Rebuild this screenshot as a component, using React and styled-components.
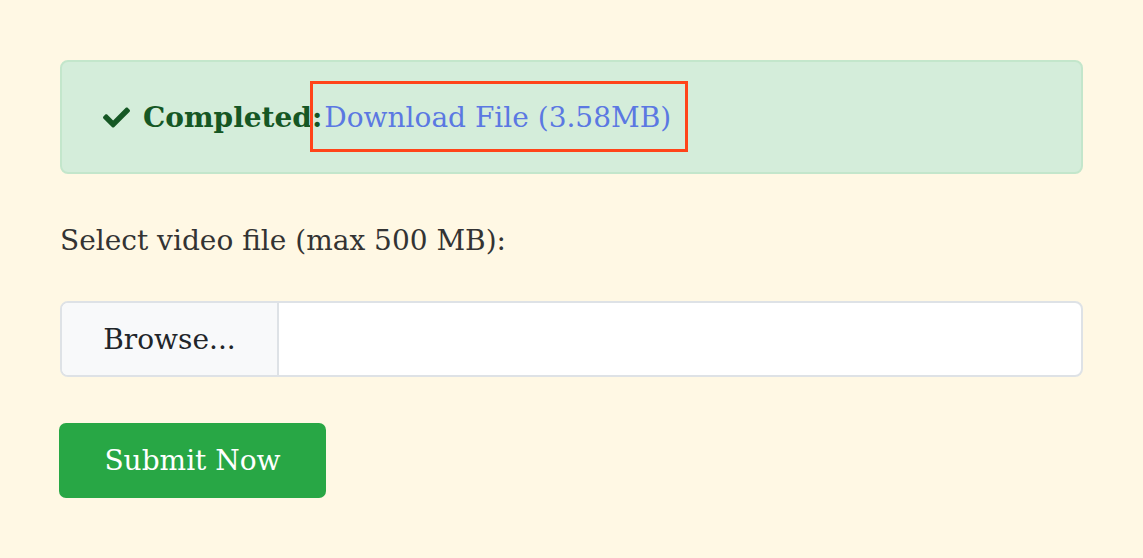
import React from 'react';
import styled, { createGlobalStyle } from 'styled-components';
import { FaCheck } from 'react-icons/fa';

const GlobalStyle = createGlobalStyle`
  body {
    margin: 0;
    background: #fff8e4;
    font-family: 'DejaVu Serif', 'Liberation Serif', serif;
  }
`;

const Page = styled.div`
  padding: 60px;
`;

const Alert = styled.div`
  box-sizing: border-box;
  height: 114px;
  display: flex;
  align-items: center;
  padding-left: 41px;
  background: #d4edda;
  border: 2px solid #c3e6cb;
  border-radius: 8px;
  color: #155724;
  font-size: 28px;
`;

const Check = styled(FaCheck)`
  width: 27px;
  height: 27px;
  margin-right: 13px;
`;

const Strong = styled.strong`
  font-weight: 700;
  margin-right: 2px;
`;

const DownloadLink = styled.a`
  position: relative;
  color: #5b78e2;
  text-decoration: none;

  /* red highlight drawn over the link */
  &::after {
    content: '';
    position: absolute;
    left: -14px;
    right: -17px;
    top: -20px;
    bottom: -18px;
    border: 3px solid #ff4419;
  }
`;

const Label = styled.div`
  margin-top: 50px;
  font-size: 28px;
  color: #333;
`;

const FileInput = styled.div`
  box-sizing: border-box;
  margin-top: 44px;
  height: 76px;
  display: flex;
  background: #fff;
  border: 2px solid #dee2e6;
  border-radius: 8px;
  overflow: hidden;
`;

const Browse = styled.div`
  width: 215px;
  display: flex;
  align-items: center;
  justify-content: center;
  background: #f8f9fa;
  border-right: 2px solid #dee2e6;
  font-size: 28px;
  color: #212529;
`;

const SubmitButton = styled.button`
  margin-top: 46px;
  margin-left: -1px;
  width: 267px;
  height: 75px;
  border: none;
  border-radius: 7px;
  background: #28a745;
  color: #fff;
  font-family: inherit;
  font-size: 28px;
`;

export default function App() {
  return (
    <>
      <GlobalStyle />
      <Page>
        <Alert>
          <Check />
          <Strong>Completed:</Strong>
          <DownloadLink href="#">Download File (3.58MB)</DownloadLink>
        </Alert>
        <Label>Select video file (max 500 MB):</Label>
        <FileInput>
          <Browse>Browse...</Browse>
        </FileInput>
        <SubmitButton>Submit Now</SubmitButton>
      </Page>
    </>
  );
}
